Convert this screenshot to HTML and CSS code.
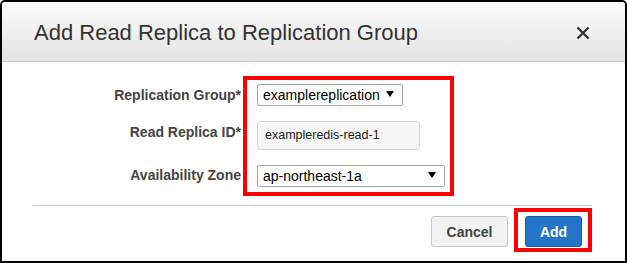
FILE: index.html
```html
<!DOCTYPE html>
<html>

<head lang="en">
  <meta charset="UTF-8">
  <title>Add Read Replica</title>
  <link rel="stylesheet" href="styles.css">
</head>

<body>
  <div class="modal">
    <div class="modal-head">
      <h2 class="title">Add Read Replica to Replication Group</h2>
      <a href="javascript:;" class="close">
        <svg width="14" height="14" viewBox="0 0 14 14">
          <path d="M1.5 1.5 L12.5 12.5 M12.5 1.5 L1.5 12.5" stroke="#333" stroke-width="2.4" fill="none" />
        </svg>
      </a>
    </div>

    <div class="modal-body">
      <div class="labels">
        <label class="row-1">Replication Group*</label>
        <label class="row-2">Read Replica ID*</label>
        <label class="row-3">Availability Zone</label>
      </div>
      <div class="mark controls">
        <div class="select sel-group">
          <span>examplereplication</span>
          <svg width="8" height="6" viewBox="0 0 8 6"><path d="M0 0 H8 L4 6 Z" fill="#000" /></svg>
        </div>
        <div class="input">exampleredis-read-1</div>
        <div class="select sel-zone">
          <span>ap-northeast-1a</span>
          <svg width="8" height="6" viewBox="0 0 8 6"><path d="M0 0 H8 L4 6 Z" fill="#000" /></svg>
        </div>
      </div>
    </div>

    <div class="modal-foot">
      <button class="btn btn-cancel">Cancel</button>
      <div class="mark add-mark">
        <button class="btn btn-add">Add</button>
      </div>
    </div>
  </div>
</body>

</html>
```

FILE: styles.css
```css
* {
  margin: 0;
  padding: 0;
  box-sizing: border-box;
}

body {
  font-family: Arial, "Liberation Sans", sans-serif;
  background: #fff;
}

.modal {
  width: 627px;
  height: 263px;
  border: 2px solid #000;
  border-radius: 5px 5px 0 0;
  overflow: hidden;
  background: #fff;
}

.modal-head {
  height: 60px;
  border-bottom: 1px solid #c8c8c8;
  background: linear-gradient(#fbfbfb, #e4e4e4);
  display: flex;
  align-items: center;
  justify-content: space-between;
  padding: 0 35px 0 32px;
}

.title {
  font-size: 22px;
  font-weight: normal;
  color: #333;
  margin-top: 2px;
}

.close {
  display: flex;
  margin-top: 2px;
}

.modal-body {
  display: flex;
  gap: 2px;
  padding: 14px 0 9px;
}

.labels {
  width: 239px;
  display: flex;
  flex-direction: column;
  padding-top: 4px;
}

.labels label {
  display: flex;
  align-items: center;
  justify-content: flex-end;
  font-size: 14px;
  font-weight: bold;
  color: #444;
}

.labels .row-1 {
  height: 30px;
}

.labels .row-2 {
  height: 44px;
}

.labels .row-3 {
  height: 42px;
}

.mark {
  border: 4px solid #f00;
}

.controls {
  width: 211px;
  display: flex;
  flex-direction: column;
  gap: 15px;
  padding: 4px 5px 5px 10px;
}

.select {
  height: 22px;
  border: 1px solid #a6a6a6;
  border-radius: 2px;
  background: #fff;
  display: flex;
  align-items: center;
  justify-content: space-between;
  padding: 0 8px 1px 5px;
  font-size: 14px;
  color: #000;
}

.select svg {
  margin-top: -2px;
}

.sel-group {
  width: 146px;
}

.sel-zone {
  width: 188px;
}

.input {
  width: 163px;
  height: 29px;
  border: 1px solid #d6d6d6;
  border-radius: 4px;
  background: #f6f6f6;
  display: flex;
  align-items: center;
  padding: 0 6px 1px 7px;
  font-size: 12.5px;
  color: #222;
}

.modal-foot {
  margin: 0 33px 0 31px;
  border-top: 1px solid #c4c4c4;
  padding-top: 2px;
  display: flex;
  justify-content: flex-end;
  align-items: flex-start;
  gap: 6px;
}

.btn {
  height: 31px;
  font-family: Arial, "Liberation Sans", sans-serif;
  font-size: 14px;
  font-weight: bold;
  border-radius: 3px;
  cursor: pointer;
}

.btn-cancel {
  width: 77px;
  margin-top: 8px;
  background: #f2f2f2;
  border: 1px solid #c6c6c6;
  color: #444;
}

.add-mark {
  padding: 4px 6px 1px 7px;
}

.btn-add {
  width: 57px;
  display: block;
  background: #2674c8;
  border: 1px solid #1b5da8;
  color: #fff;
}
```
